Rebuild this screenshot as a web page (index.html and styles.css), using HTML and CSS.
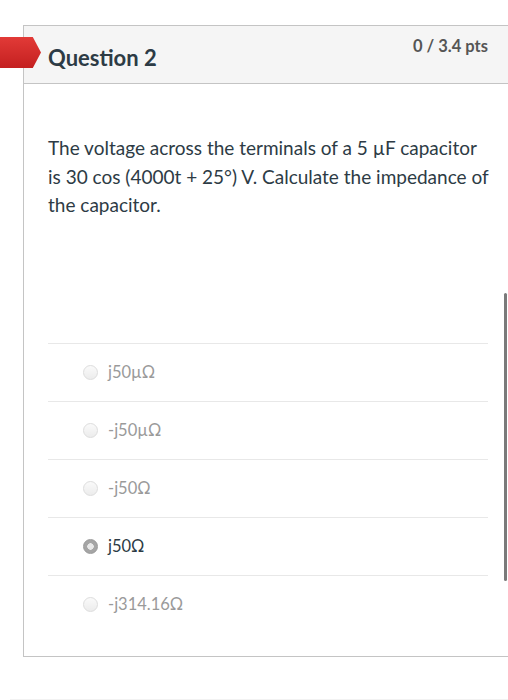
FILE: index.html
```html
<!DOCTYPE html>
<html>

<head>
  <meta charset="UTF-8">
  <title>Question 2</title>
  <link rel="stylesheet" href="styles.css">
</head>

<body>

  <div class="question">
    <div class="header">
      <span class="flag"></span>
      <h2>Question 2</h2>
      <span class="points">0 / 3.4 pts</span>
    </div>

    <div class="body">
      <p class="text">The voltage across the terminals of a 5 µF capacitor is 30 cos (4000t + 25°) V. Calculate the impedance of the capacitor.</p>

      <div class="answers">
        <div class="answer"><span class="radio"></span>j50µΩ</div>
        <div class="answer"><span class="radio"></span>-j50µΩ</div>
        <div class="answer"><span class="radio"></span>-j50Ω</div>
        <div class="answer selected"><span class="radio"></span>j50Ω</div>
        <div class="answer"><span class="radio"></span>-j314.16Ω</div>
      </div>
    </div>

    <div class="scrollbar"></div>
  </div>

  <div class="footer-line"></div>

</body>

</html>
```

FILE: styles.css
```css
:root {
  --border: #c4c4c4;
  --header-bg: #f5f5f5;
  --flag-red: #d82b2b;
}

body {
  background-color: #fff;
  margin: 0;
  width: 508px;
  height: 700px;
  overflow: hidden;
  font-family: 'Lato', 'Liberation Sans', sans-serif;
  color: #2d3b45;
}

.question {
  position: relative;
  margin: 25px 0 0 23px;
  width: 500px;
  border: 1px solid var(--border);
  box-sizing: border-box;
}

.header {
  position: relative;
  height: 57px;
  background-color: var(--header-bg);
  border-bottom: 1px solid var(--border);
  display: flex;
  justify-content: space-between;
  padding: 0 34px 0 24px;
}

.flag {
  position: absolute;
  left: -24px;
  top: 11px;
  width: 41px;
  height: 31px;
  background: linear-gradient(#e23a37, #c42020);
  clip-path: polygon(0 0, 80% 0, 100% 50%, 80% 100%, 0 100%);
}

.header h2 {
  margin: 0;
  padding-top: 18px;
  font-size: 22px;
  font-weight: 700;
  color: #2d3b45;
}

.points {
  padding-top: 10px;
  font-size: 16.5px;
  font-weight: 700;
  color: #555;
}

.body {
  padding: 50px 0 23px 24px;
}

.text {
  margin: 0;
  width: 445px;
  font-size: 19px;
  line-height: 28.5px;
  color: #2d3b45;
}

.answers {
  margin-top: 123px;
  width: 440px;
}

.answer {
  display: flex;
  align-items: center;
  height: 57px;
  border-top: 1px solid #e8e8e8;
  padding-left: 35px;
  font-size: 16.5px;
  color: #9a9a9a;
}

.radio {
  width: 15px;
  height: 15px;
  margin-right: 10px;
  border-radius: 50%;
  border: 1px solid #ddd;
  background: linear-gradient(#fafafa, #ececec);
  box-sizing: border-box;
}

.selected {
  color: #2d3b45;
}

.selected .radio {
  border: 1px solid #999;
  background: radial-gradient(circle, #e8e8e8 0 3px, #a5a5a5 3.5px);
}

.scrollbar {
  position: absolute;
  left: 480px;
  top: 267px;
  width: 3px;
  height: 288px;
  border-radius: 2px;
  background-color: #7a7a7a;
}

.footer-line {
  margin: 42px 0 0 10px;
  height: 1px;
  background-color: #f2f2f2;
}
```
